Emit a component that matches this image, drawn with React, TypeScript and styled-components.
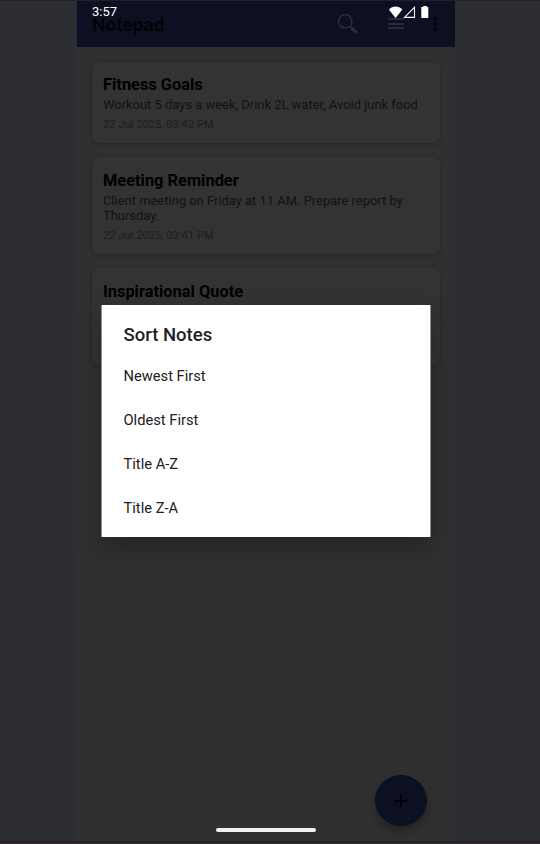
import React from "react";
import styled, { createGlobalStyle } from "styled-components";

const GlobalStyle = createGlobalStyle`
  * { box-sizing: border-box; }
  body { margin: 0; background: #2d2e32; font-family: Roboto, sans-serif; }
`;

const Stage = styled.div`
  height: 844px;
  display: flex;
  justify-content: center;
  padding-right: 8px;
  border-top: 1px solid #202125;
  background: #2d2e32;
  overflow: hidden;
  position: relative;
`;

const BottomEdge = styled.div`
  position: absolute;
  left: 0;
  right: 0;
  bottom: 0;
  height: 3px;
  background: #2e292f;
  border-top: 1px solid #1f1f22;
`;

const Phone = styled.main`
  position: relative;
  width: 378px;
  height: 840px;
  background: #303030;
`;

const AppBar = styled.header`
  height: 46px;
  padding: 0 16px 0 15px;
  display: flex;
  align-items: center;
  background: #0d0f23;
`;

const AppTitle = styled.h1`
  flex: 1;
  margin: 0;
  padding-top: 2px;
  font-size: 19px;
  font-weight: 500;
  line-height: 24px;
  color: #030306;
`;

const Actions = styled.div`
  display: flex;
  align-items: center;
  svg { display: block; }
`;

const SearchIcon = styled.svg`
  width: 22px;
  height: 22px;
  margin-right: 28px;
`;

const SortIcon = styled.svg`
  width: 18px;
  height: 14px;
  margin-right: 27px;
`;

const MoreIcon = styled.svg`
  width: 6px;
  height: 16px;
  margin-right: 1px;
`;

const StatusBar = styled.div`
  position: absolute;
  top: 0;
  left: 15px;
  right: 24px;
  height: 22px;
  display: flex;
  justify-content: space-between;
  align-items: center;
  font-size: 13px;
  line-height: 22px;
  color: #fff;
`;

const StatusIcons = styled.svg`
  width: 42px;
  height: 14px;
`;

const NoteList = styled.section`
  display: flex;
  flex-direction: column;
  gap: 14px;
  padding: 15px 15px 0;
`;

const NoteCard = styled.article`
  min-height: 81px;
  padding: 13px 11px 12px;
  border-radius: 7px;
  background: #333;
  box-shadow: 0 1px 4px rgba(0, 0, 0, 0.22);

  & + & { padding-top: 14px; }
`;

const NoteTitle = styled.h2`
  margin: 0;
  font-size: 16.4px;
  font-weight: 700;
  line-height: 20px;
  color: #000;
`;

const NoteText = styled.p`
  margin: 2px 0 0;
  font-size: 12.95px;
  line-height: 15px;
  color: #121212;
`;

const NoteDate = styled.time`
  display: block;
  margin-top: 6px;
  font-size: 11.2px;
  line-height: 13px;
  color: #1e1e1e;
`;

const HiddenBody = styled.div`
  height: 51px;
`;

const Dialog = styled.div`
  position: absolute;
  top: 304px;
  left: 24px;
  width: 330px;
  height: 232px;
  padding: 18px 21.5px 0;
  border: solid #8f8f8f;
  border-width: 0 1px;
  border-radius: 1px;
  background: #fff;
  box-shadow: 0 11px 24px 1px rgba(0, 0, 0, 0.24);
`;

const DialogTitle = styled.h2`
  margin: 0 0 7px;
  font-size: 18.5px;
  font-weight: 500;
  line-height: 24px;
  color: #212121;
`;

const Options = styled.ul`
  margin: 0;
  padding: 0;
  list-style: none;
`;

const Option = styled.li`
  height: 44px;
  display: flex;
  align-items: center;
  font-size: 14.7px;
  color: #212121;
`;

const AddButton = styled.button`
  position: absolute;
  left: 298px;
  top: 774px;
  width: 52px;
  height: 51px;
  padding: 0;
  border: 0;
  border-radius: 50%;
  display: grid;
  place-items: center;
  background: #0d0f23;
  box-shadow: 0 5px 9px rgba(0, 0, 0, 0.3);
`;

const HomeHandle = styled.div`
  position: absolute;
  left: 139px;
  top: 827px;
  width: 100px;
  height: 4px;
  border-radius: 2px;
  background: #f1efef;
`;

const notes = [
  {
    title: "Fitness Goals",
    text: "Workout 5 days a week, Drink 2L water, Avoid junk food",
    date: "22 Jul 2025, 03:42 PM",
  },
  {
    title: "Meeting Reminder",
    text: "Client meeting on Friday at 11 AM. Prepare report by Thursday.",
    date: "22 Jul 2025, 03:41 PM",
  },
  { title: "Inspirational Quote", text: "", date: "" },
];

const sortOptions = ["Newest First", "Oldest First", "Title A-Z", "Title Z-A"];

export default function App() {
  return (
    <>
      <GlobalStyle />
      <Stage>
        <Phone>
          <AppBar>
            <AppTitle>Notepad</AppTitle>
            <Actions>
              <SearchIcon viewBox="0 0 22 22" fill="none">
                <circle cx="8.3" cy="8.2" r="6.7" stroke="#2d2e31" strokeWidth="1.4" />
                <path d="M13.1 13.1l2 2" stroke="#303135" strokeWidth="1.6" />
                <path d="M14.6 14.9l5.1 4.8" stroke="#2d2e31" strokeWidth="3.5" />
              </SearchIcon>
              <SortIcon viewBox="0 0 18 14">
                <path d="M1 2h16M1 7h16M1 11h16" stroke="#2b2c33" strokeWidth="2" />
              </SortIcon>
              <MoreIcon viewBox="0 0 6 16" fill="#050609">
                <circle cx="3" cy="2.6" r="1.8" />
                <circle cx="3" cy="8" r="1.8" />
                <circle cx="3" cy="13.5" r="1.8" />
              </MoreIcon>
            </Actions>
          </AppBar>
          <NoteList>
            {notes.map((note) => (
              <NoteCard key={note.title}>
                <NoteTitle>{note.title}</NoteTitle>
                {note.text ? (
                  <>
                    <NoteText>{note.text}</NoteText>
                    <NoteDate>{note.date}</NoteDate>
                  </>
                ) : (
                  <HiddenBody />
                )}
              </NoteCard>
            ))}
          </NoteList>
          <AddButton aria-label="Add note">
            <svg width="14" height="14" viewBox="0 0 14 14">
              <path d="M7 .5v13M.5 7h13" stroke="#000" strokeWidth="1.8" />
            </svg>
          </AddButton>
          <Dialog role="dialog">
            <DialogTitle>Sort Notes</DialogTitle>
            <Options>
              {sortOptions.map((label) => (
                <Option key={label}>{label}</Option>
              ))}
            </Options>
          </Dialog>
          <StatusBar>
            <span>3:57</span>
            <StatusIcons viewBox="0 0 42 14" fill="#fff">
              <path d="M0 4.7C3.4 0.3 9.8 0.3 13.2 4.7L6.6 13z" />
              <path d="M25.5 2.4v10h-10z" fill="none" stroke="#fff" strokeWidth="1.1" />
              <path d="M34.2 1h3.6v1h1.5v11h-7V2h1.9z" />
            </StatusIcons>
          </StatusBar>
          <HomeHandle />
        </Phone>
        <BottomEdge />
      </Stage>
    </>
  );
}
